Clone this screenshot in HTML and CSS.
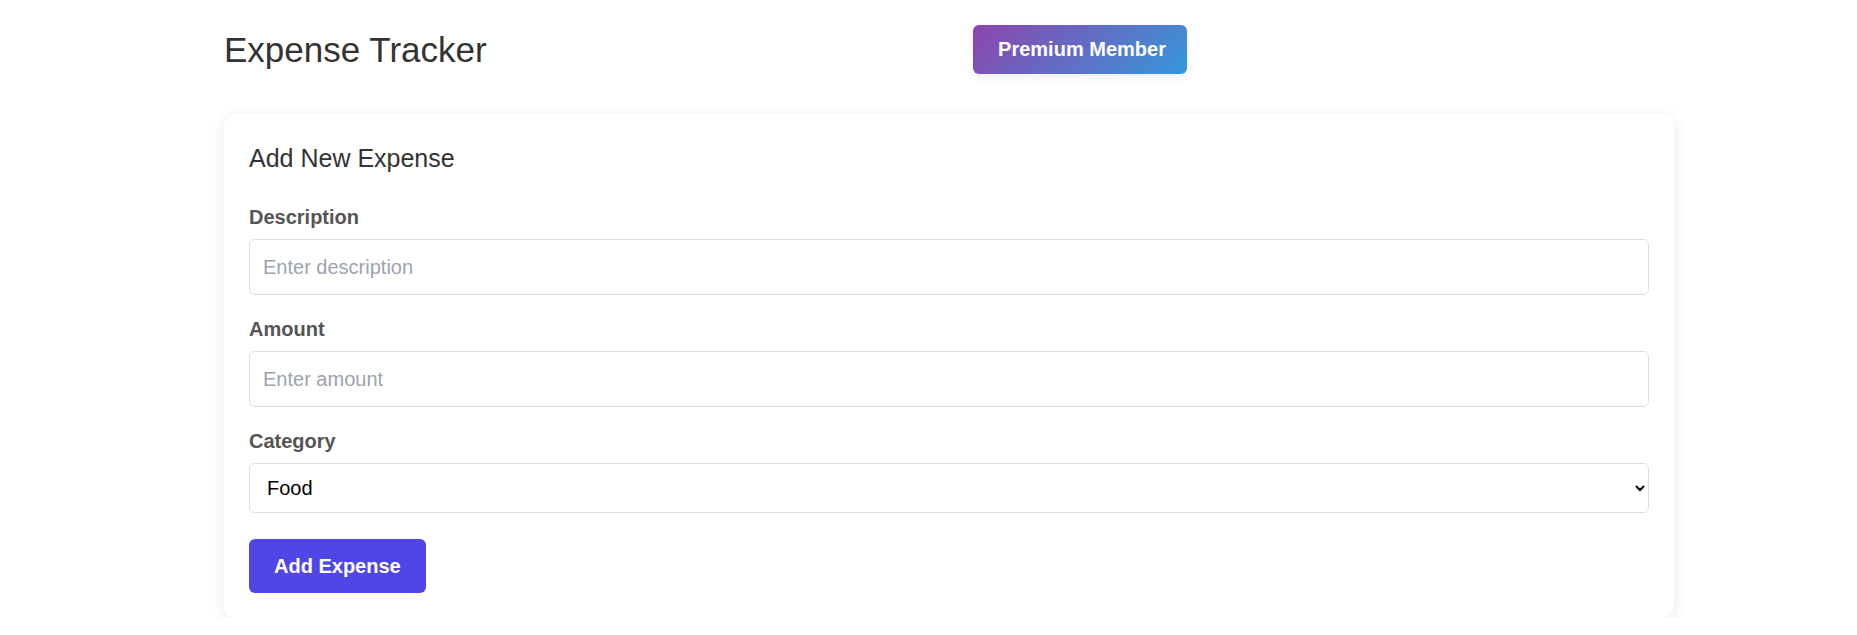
FILE: index.html
```html
<!DOCTYPE html>
<html lang="en">
<head>
<meta charset="utf-8">
<title>Expense Tracker</title>
<link rel="stylesheet" href="styles.css">
</head>
<body>
<div class="container">
  <header class="header">
    <h1 class="title">Expense Tracker</h1>
    <div class="badge">Premium Member</div>
  </header>
  <section class="card">
    <h2 class="card-title">Add New Expense</h2>
    <form class="form">
      <div class="group">
        <label class="label" for="desc">Description</label>
        <input class="field" id="desc" type="text" placeholder="Enter description">
      </div>
      <div class="group">
        <label class="label" for="amount">Amount</label>
        <input class="field" id="amount" type="text" placeholder="Enter amount">
      </div>
      <div class="group">
        <label class="label" for="cat">Category</label>
        <select class="select" id="cat">
          <option>Food</option>
          <option>Transport</option>
          <option>Entertainment</option>
          <option>Other</option>
        </select>
      </div>
      <div class="actions">
        <button class="btn" type="button">Add Expense</button>
      </div>
    </form>
  </section>
</div>
</body>
</html>
```

FILE: styles.css
```css
* { box-sizing: border-box; }

html, body {
  margin: 0;
  padding: 0;
  background: #ffffff;
  font-family: "Liberation Sans", Arial, sans-serif;
}

.container {
  width: 1450px;
  margin-left: 224px;
  padding-top: 25px;
}

.header {
  display: flex;
  align-items: center;
  justify-content: space-between;
  width: 963px;
  height: 49px;
}

.title {
  margin: 0;
  font-size: 35px;
  font-weight: 400;
  color: #333333;
  line-height: 40px;
}

.badge {
  height: 49px;
  width: 214px;
  padding-left: 4px;
  display: flex;
  align-items: center;
  justify-content: center;
  color: #ffffff;
  font-weight: 700;
  font-size: 20px;
  border-radius: 6px;
  background: linear-gradient(135deg, #8e44ad 0%, #3498db 100%);
  box-shadow: 0 3px 8px rgba(0, 0, 0, 0.08);
}

.card {
  margin-top: 40px;
  background: #ffffff;
  border-radius: 12px;
  padding: 25px;
  box-shadow: 0 3px 15px rgba(0, 0, 0, 0.09);
}

.card-title {
  margin: 5px 0 0;
  font-size: 25px;
  font-weight: 400;
  color: #333333;
  line-height: 29px;
}

.form {
  margin-top: 33px;
  display: flex;
  flex-direction: column;
  gap: 23px;
}

.group {
  display: flex;
  flex-direction: column;
}

.label {
  font-size: 20px;
  font-weight: 700;
  color: #555555;
  line-height: 23px;
  margin-bottom: 10px;
}

.field {
  height: 56px;
  width: 100%;
  padding: 0 13px;
  border: 1px solid #dddddd;
  border-radius: 6px;
  font-family: "Liberation Sans", Arial, sans-serif;
  font-size: 20px;
  color: #333333;
  background: #ffffff;
  outline: none;
}

.field::placeholder {
  color: #9ca3af;
}

.select {
  height: 50px;
  width: 100%;
  padding: 0 16px 0 13px;
  border: 1px solid #dddddd;
  border-radius: 6px;
  font-family: "Liberation Sans", Arial, sans-serif;
  font-size: 20px;
  color: #000000;
  background: #ffffff;
}

.actions {
  margin-top: 3px;
  display: flex;
}

.btn {
  height: 54px;
  padding: 0 25px;
  border: none;
  border-radius: 6px;
  background: #4f46e5;
  color: #ffffff;
  font-family: "Liberation Sans", Arial, sans-serif;
  font-size: 20px;
  font-weight: 700;
  cursor: pointer;
}
```
